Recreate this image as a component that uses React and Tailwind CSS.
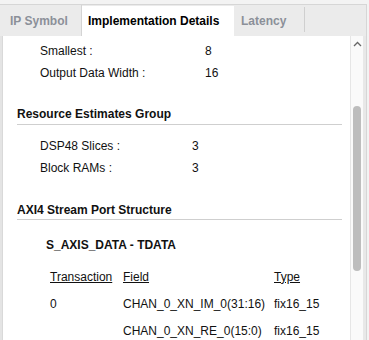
export default function App() {
  const font = { fontFamily: '"Liberation Sans", Arial, sans-serif' };
  return (
    <div className="w-[369px] h-[340px] bg-[#f3f3f3] overflow-hidden text-[12px] text-[#111]" style={font}>
      <div className="pt-[4px] h-full">
        <div className="w-[367px] h-full border-t border-r border-[#d6d6d6] flex flex-col">
          {/* tab bar */}
          <div className="h-[31px] bg-[#ebebeb] flex items-stretch shrink-0">
            <div className="w-[82px] border-r border-[#d4d4d4] flex items-center pl-[10px] font-bold text-[#8b9099] pt-[1px]">
              IP Symbol
            </div>
            <div className="w-[152px] bg-white flex items-center pl-[6px] font-bold text-black mt-[1px]">
              Implementation Details
            </div>
            <div className="w-[70px] flex items-center pl-[7px] font-bold text-[#8b9099] pt-[1px]">
              Latency
            </div>
            <div className="w-px bg-[#cfcfcf] my-[2px] mb-[4px]"></div>
            <div className="flex-1"></div>
          </div>
          {/* body */}
          <div className="flex flex-1 min-h-0">
            <div className="w-[3px] bg-[#e4e4e4] border-r border-[#d9d9d9]"></div>
            <div className="w-[347px] bg-white flex flex-col pr-[8px]">
              <div className="mt-[4px] ml-[37px]">
                <div className="h-[22px] flex items-center">
                  <span className="w-[165px]">Smallest :</span>
                  <span>8</span>
                </div>
                <div className="h-[22px] flex items-center">
                  <span className="w-[165px]">Output Data Width :</span>
                  <span>16</span>
                </div>
              </div>
              <div className="mt-[22px] ml-[14px] font-bold leading-[16px] pb-[2px] border-b border-[#cfcfcf]">
                Resource Estimates Group
              </div>
              <div className="mt-[10px] ml-[37px]">
                <div className="h-[22px] flex items-center">
                  <span className="w-[152px]">DSP48 Slices :</span>
                  <span>3</span>
                </div>
                <div className="h-[22px] flex items-center">
                  <span className="w-[152px]">Block RAMs :</span>
                  <span>3</span>
                </div>
              </div>
              <div className="mt-[23px] ml-[14px] font-bold leading-[16px] pb-[1px] border-b border-[#cfcfcf]">
                AXI4 Stream Port Structure
              </div>
              <div className="mt-[17px] ml-[43px] font-bold leading-[16px]">S_AXIS_DATA - TDATA</div>
              <div className="mt-[10px] ml-[47px]">
                <div className="h-[27px] flex items-center">
                  <span className="w-[73px] underline">Transaction</span>
                  <span className="w-[151px] underline">Field</span>
                  <span className="underline">Type</span>
                </div>
                <div className="h-[27px] flex items-center">
                  <span className="w-[73px]">0</span>
                  <span className="w-[151px]">CHAN_0_XN_IM_0(31:16)</span>
                  <span>fix16_15</span>
                </div>
                <div className="h-[27px] flex items-center">
                  <span className="w-[73px]"></span>
                  <span className="w-[151px]">CHAN_0_XN_RE_0(15:0)</span>
                  <span>fix16_15</span>
                </div>
              </div>
            </div>
            {/* scrollbar */}
            <div className="w-[13px] bg-[#fafafa] border-l border-[#e6e6e6] flex flex-col items-center relative">
              <svg width="9" height="6" viewBox="0 0 9 6" className="mt-[5px]">
                <path d="M1 5 L4.5 1.5 L8 5" fill="none" stroke="#666" strokeWidth="1.3" />
              </svg>
              <div className="w-[8px] h-[165px] bg-[#bdbdbd] rounded-full mt-[59px] ml-[-1px]"></div>
            </div>
            <div className="w-[3px] bg-[#e8e8e8]"></div>
          </div>
        </div>
      </div>
    </div>
  );
}
